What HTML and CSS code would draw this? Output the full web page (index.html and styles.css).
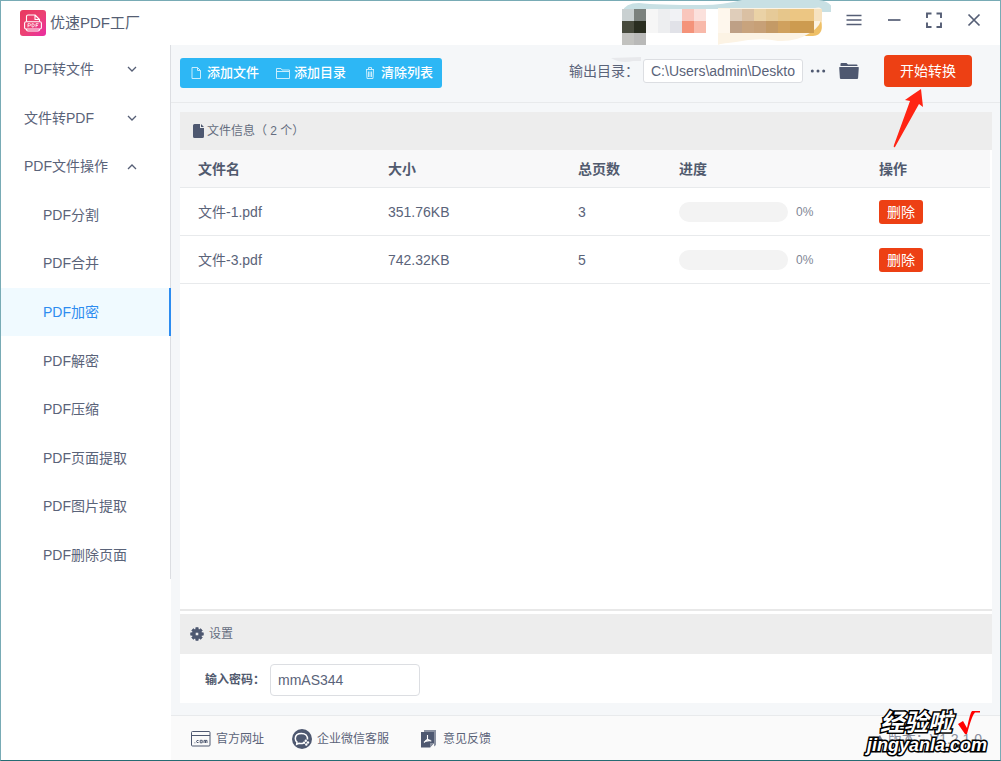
FILE: index.html
```html
<!DOCTYPE html>
<html lang="zh-CN">
<head>
<meta charset="utf-8">
<title>优速PDF工厂</title>
<link rel="stylesheet" href="styles.css">
</head>
<body>
<div class="window">
  <header class="titlebar">
    <svg class="logo" viewBox="0 0 26 26" aria-hidden="true">
      <defs><linearGradient id="lg" x1="0" y1="0" x2="1" y2="1"><stop offset="0" stop-color="#e8385f"/><stop offset=".5" stop-color="#ec4272"/><stop offset="1" stop-color="#e92da4"/></linearGradient></defs>
      <rect width="26" height="26" rx="3" fill="url(#lg)"/>
      <g fill="none" stroke="#fff" stroke-width="1.100" stroke-linejoin="round">
        <path d="M6.500 11.500V6.500q0-1.500 1.500-1.500h7l4.500 4.500v2M15 5v4.500h4.500M6.500 19v.5q0 1.500 1.500 1.500h10q1.500 0 1.500-1.500V19"/>
        <rect x="4.600" y="11.700" width="16.800" height="7.300" rx="1.500"/>
        <path d="M8 17.300v-3.600h1.500q1.200 0 1.200 1t-1.200 1H8M12 13.700v3.300h.8q1.500 0 1.500-1.650t-1.500-1.650zM16 17.300v-3.600h2.500M16 15.400h2" stroke-width=".8"/>
      </g>
    </svg>
    <h1 class="app-name">优速PDF工厂</h1>
    <div class="window-buttons">
      <button aria-label="菜单"><svg viewBox="0 0 18 18"><path d="M1.500 4.500h15M1.500 9h15M1.500 13.500h15" stroke-width="1.600"/></svg></button>
      <button aria-label="最小化"><svg viewBox="0 0 18 18"><path d="M3 9h12.500" stroke-width="1.700"/></svg></button>
      <button aria-label="最大化"><svg viewBox="0 0 18 18"><path d="M2 7V2.500h4.500M11.500 2.500H16V7M16 11.500V16h-4.500M6.500 16H2v-4.500" stroke-width="1.900"/></svg></button>
      <button aria-label="关闭"><svg viewBox="0 0 18 18"><path d="M3.500 3.500l11 11M14.500 3.500l-11 11" stroke-width="1.700"/></svg></button>
    </div>
  </header>
  <nav class="sidebar">
    <ul class="menu">
      <li><button class="group">PDF转文件<svg class="chevron" viewBox="0 0 10 10"><path d="M1 3l4 4 4-4"/></svg></button></li>
      <li><button class="group">文件转PDF<svg class="chevron" viewBox="0 0 10 10"><path d="M1 3l4 4 4-4"/></svg></button></li>
      <li><button class="group">PDF文件操作<svg class="chevron" viewBox="0 0 10 10"><path d="M1 8l4-4 4 4"/></svg></button></li>
      <li><a href="#">PDF分割</a></li>
      <li><a href="#">PDF合并</a></li>
      <li><a href="#" class="active">PDF加密</a></li>
      <li><a href="#">PDF解密</a></li>
      <li><a href="#">PDF压缩</a></li>
      <li><a href="#">PDF页面提取</a></li>
      <li><a href="#">PDF图片提取</a></li>
      <li><a href="#">PDF删除页面</a></li>
    </ul>
  </nav>
  <main class="main">
    <div class="toolbar">
      <div class="actions">
        <button><svg viewBox="0 0 14 14"><path d="M3 1.500h5.500l3 3v8H3zM8.500 1.500v3h3"/></svg>添加文件</button>
        <button><svg viewBox="0 0 14 14"><path d="M.5 12.500v-10h4.500l1 1.500h7.500v8.500zM.5 5.500h13"/></svg>添加目录</button>
        <button><svg viewBox="0 0 14 14"><path d="M3 3.500h8M5.500 3.500v-2h3v2M3.500 3.500l.5 9h6l.5-9M5.500 5.500v5.500M7 5.500v5.500M8.500 5.500v5.500"/></svg>清除列表</button>
      </div>
      <div class="output">
        <label for="dir">输出目录：</label>
        <input id="dir" class="dir" type="text" value="C:\Users\admin\Deskto">
        <button class="icon-button" aria-label="更多"><svg viewBox="0 0 16 16"><circle cx="2.300" cy="8" r="1.500"/><circle cx="8" cy="8" r="1.500"/><circle cx="13.700" cy="8" r="1.500"/></svg></button>
        <button class="icon-button folder" aria-label="打开目录"><svg viewBox="0 0 20 18"><path d="M1.500 4V2q0-1 1-1h5l1.500 1.500h8.500q1 0 1 1V4zM.8 5h18.400q.7 0 .6.700l-.7 10.300q-.1 1-1 1H1.900q-.9 0-1-1L.2 5.700Q.1 5 .8 5z"/></svg></button>
        <button class="start">开始转换</button>
      </div>
    </div>
    <section class="files">
      <h2 class="bar"><svg class="doc" viewBox="0 0 11 14"><path d="M1.500 0H7v4h4v8.500q0 1.500-1.500 1.500h-8Q0 14 0 12.500v-11Q0 0 1.500 0zM8 0l3 3H8z"/></svg>文件信息（ 2 个）</h2>
      <table>
        <colgroup><col class="c-name"><col class="c-size"><col class="c-pages"><col class="c-progress"><col></colgroup>
        <thead><tr><th>文件名</th><th>大小</th><th>总页数</th><th>进度</th><th>操作</th></tr></thead>
        <tbody>
          <tr><td>文件-1.pdf</td><td>351.76KB</td><td>3</td><td><div class="progress"><span class="track"></span>0%</div></td><td><button class="delete">删除</button></td></tr>
          <tr><td>文件-3.pdf</td><td>742.32KB</td><td>5</td><td><div class="progress"><span class="track"></span>0%</div></td><td><button class="delete">删除</button></td></tr>
        </tbody>
      </table>
    </section>
    <section class="settings">
      <h2 class="bar"><svg class="gear" viewBox="0 0 14 14"><path fill-rule="evenodd" d="M5.800 2V.6h2.400V2l1.400.6 1-1 1.800 1.800-1 1 .6 1.400h1.400v2.400H12l-.6 1.400 1 1-1.800 1.800-1-1-1.400.6v1.400H5.800V12l-1.400-.6-1 1-1.800-1.800 1-1L2 8.200H.6V5.800H2l.6-1.400-1-1 1.800-1.800 1 1zM7 5.200a1.800 1.800 0 1 0 0 3.600 1.800 1.800 0 0 0 0-3.600z" stroke="#4e5870" stroke-width=".6"/></svg>设置</h2>
      <div class="field">
        <label for="pwd">输入密码：</label>
        <input id="pwd" class="pwd" type="text" value="mmAS344">
      </div>
    </section>
    <footer class="footer">
      <a href="#"><svg class="site" viewBox="0 0 20 16"><rect x=".5" y=".5" width="18.500" height="14.500" rx="1"/><path d="M.5 4.500h18.500M3.500 11.800h.8M7.500 9.500q-2-.5-2 1t2 1M9.200 9.300h2v2.500h-2zM13 12V9.400h1.500V12M14.500 9.400H16V12"/></svg>官方网址</a>
      <a href="#"><svg class="wechat" viewBox="0 0 20 20"><circle cx="10" cy="10" r="10" fill="#4e5870"/><path d="M15.500 10.500q.2-6-6-6t-6.200 5q0 2.400 1.700 3.700l-.3 2 2.300-1q2 .5 4.200 0" fill="none" stroke="#fff" stroke-width="1.500"/><g fill="#fff"><circle cx="13.800" cy="11.800" r="1.200"/><circle cx="16" cy="13.500" r="1.200"/><circle cx="14.300" cy="15.500" r="1.200"/><circle cx="12" cy="13.800" r="1.200"/></g></svg>企业微信客服</a>
      <a href="#" class="opinion"><svg class="feedback" viewBox="0 0 15 18"><path d="M3 0h12v15l-2 1.500V2H3z" fill="#8990a0"/><path d="M0 2h13v11l-4 4.500H0z" fill="#4e5870"/><path d="M6.500 5v4.200L3 12.500M6.500 9.200l3.800 2M4 11.400l5.500-1" fill="none" stroke="#fff" stroke-width="1.100"/><path d="M9 17.500V13h4z" fill="#8990a0"/></svg>意见反馈</a>
      <span class="version"><svg class="up" viewBox="0 0 10 10"><path d="M0 8l6-7 4 8-4-2z" fill="#717b92"/></svg>版本：V1.2.1.0</span>
    </footer>
  </main>
  <svg class="mosaic" viewBox="0 0 220 66" aria-hidden="true">
    <path d="M11 12Q14 3 28 3q18 2 64 2 20 0 39-5h77q14 2 14 12z" fill="#c8e0e4"/>
    <path d="M209 16q6 19-7 20h-24V16z" fill="#efc067"/>
    <path d="M107 8h97q8-2 7 5 1 12-12 20-14 9-32 8-20-4-42 1-18 2-18 3z" fill="#fcf3e4"/>
    <path d="M0 58q10 6 22 3h8v-4z" fill="#e8e9ec"/>
    <g shape-rendering="crispEdges">
      <path d="M11 9h12v12H11z" fill="#c9d0d1"/><path d="M23 9h12v12H23z" fill="#7b817d"/>
      <path d="M11 21h12v12H11z" fill="#484b3e"/><path d="M23 21h12v12H23z" fill="#292d20"/>
      <path d="M11 33h12v12H11z" fill="#c2c2bf"/><path d="M23 33h12v12H23z" fill="#b9b9b8"/>
      <path d="M35 9h12v24H35z" fill="#f6f6f6"/><path d="M47 9h12v24H47z" fill="#edeef0"/>
      <path d="M59 9h12v12H59z" fill="#f1f2f5"/><path d="M59 21h12v12H59z" fill="#e1e2e8"/>
      <path d="M71 9h12v12H71z" fill="#f9c6bc"/><path d="M71 21h12v12H71z" fill="#f4937a"/>
      <path d="M83 9h12v12H83z" fill="#fbe1dc"/><path d="M83 21h12v12H83z" fill="#f8b9aa"/>
      <path d="M95 9h12v24H95z" fill="#fff"/><path d="M107 9h12v24h-12z" fill="#fef7ed"/>
      <path d="M119 9h12v12h-12z" fill="#dfcdba"/><path d="M119 21h12v12h-12z" fill="#bea086"/>
      <path d="M131 9h12v12h-12z" fill="#dac0a3"/><path d="M131 21h12v12h-12z" fill="#c8a37d"/>
      <path d="M143 9h12v12h-12z" fill="#ead2a6"/><path d="M143 21h12v12h-12z" fill="#c7a077"/>
      <path d="M155 9h12v12h-12z" fill="#e6ca98"/><path d="M155 21h12v12h-12z" fill="#c49a66"/>
      <path d="M167 9h12v12h-12z" fill="#e6c68b"/><path d="M167 21h12v12h-12z" fill="#d0a15e"/>
      <path d="M179 9h24v12h-24z" fill="#ecc683"/><path d="M179 21h24v12h-24z" fill="#cd9b50"/>
      <path d="M203 9h8v12h-8z" fill="#f6e2c0"/>
    </g>
  </svg>
  <svg class="arrow" viewBox="0 0 32 60" aria-hidden="true"><path d="M28 0l2 18-4-3L2 58Q0 59 1 56L17 12l-5-1q7-5 16-11z" fill="#ff2413"/></svg>
  <div class="watermark">
    <div class="mark-top"><span>经验啦</span><svg viewBox="0 0 24 24" aria-hidden="true"><path d="M1 13l5-3 4 7Q13 2 15 0h8v1.500h-5Q15 4 10 23H8Z" fill="#f00"/></svg></div>
    <div class="mark-site">jingyanla.com</div>
  </div>
</div>
</body>
</html>
```
FILE: styles.css
```css
* { box-sizing: border-box; }
body {
  margin: 0;
  font: 14px/20px "Liberation Sans", "Noto Sans CJK SC", sans-serif;
  color: #5a6379;
}
button, input { font: inherit; color: inherit; }
button { border: 0; padding: 0; background: none; cursor: pointer; }
a { color: inherit; text-decoration: none; }
h1, h2 { margin: 0; font-weight: 400; }
svg { display: block; flex: none; }

.window {
  position: relative;
  min-height: 100vh;
  display: grid;
  grid-template: 44px 1fr / 170px minmax(0, 1fr);
  border: 1px solid #78abb5;
  border-bottom-color: #256c73;
  background: #fff;
}

.titlebar {
  grid-column: 1 / -1;
  display: flex;
  align-items: center;
  gap: 4px;
  padding: 0 17px 0 19px;
}
.logo { width: 26px; height: 26px; }
.app-name { font-size: 15px; color: #555e73; }
.window-buttons { display: flex; gap: 22px; margin-left: auto; padding-bottom: 6px; }
.window-buttons svg { width: 18px; height: 18px; fill: none; stroke: #555e75; }

.menu {
  height: 534px;
  margin: 0;
  padding: 0;
  list-style: none;
  display: grid;
  grid-auto-rows: 1fr;
  border-right: 1px solid #dcdee2;
}
.menu li { display: grid; }
.menu a { display: flex; align-items: center; padding-left: 42px; }
.group {
  display: flex;
  align-items: center;
  justify-content: space-between;
  padding: 0 33px 0 23px;
}
.chevron { width: 10px; height: 10px; fill: none; stroke: #555e75; stroke-width: 1.3; }
.menu .active {
  margin-right: -1px;
  color: #2d8cf0;
  background: #f0faff;
  border-right: 2px solid #2d8cf0;
}

.main {
  display: flex;
  flex-direction: column;
  background: #f5f7f9;
}
.toolbar {
  display: flex;
  align-items: flex-start;
  justify-content: space-between;
  height: 58px;
  padding: 10px 28px 0 9px;
  border-bottom: 1px solid #e8eaec;
}
.actions {
  display: flex;
  gap: 17px;
  margin-top: 3px;
  padding: 0 9px;
  height: 30px;
  border-radius: 3px;
  background: #2db7f5;
}
.actions button { display: flex; align-items: center; gap: 4px; color: #fff; font-size: 13px; font-weight: 500; }
.actions svg { width: 14px; height: 14px; fill: none; stroke: #c9edfd; }
.output { display: flex; align-items: center; height: 32px; }
.dir {
  width: 160px;
  height: 24px;
  margin-left: 4px;
  padding: 0 7px;
  border: 1px solid #dcdee2;
  border-radius: 3px;
  background: #fff;
}
.icon-button { margin-left: 7px; }
.icon-button svg { width: 16px; height: 16px; fill: #4e5870; }
.folder { margin-left: 13px; }
.folder svg { width: 20px; height: 18px; }
.start {
  width: 88px;
  height: 32px;
  margin-left: 25px;
  border-radius: 4px;
  background: #ed4014;
  color: #fff;
}

.bar {
  display: flex;
  align-items: center;
  height: 38px;
  gap: 3px;
  background: #ededed;
  font-size: 12px;
  color: #656d80;
}
.bar svg { fill: #4e5870; }
.doc { width: 11px; height: 14px; }
.files {
  flex: 1;
  margin: 9px 8px 0 9px;
  border-bottom: 2px solid #e8e8e8;
  background: #fff;
}
.files .bar { padding-left: 13px; }
table { width: calc(100% - 2px); border-collapse: separate; border-spacing: 0; table-layout: fixed; }
.c-name, .c-size { width: 190px; }
.c-pages { width: 101px; }
.c-progress { width: 200px; }
th, td { height: 48px; padding: 0 0 0 18px; border-bottom: 1px solid #e8eaec; text-align: left; }
th { height: 38px; background: #f8f8f9; color: #515a6e; font-weight: 700; }
.progress { display: flex; align-items: center; gap: 8px; font-size: 12px; color: #808695; }
.track { width: 109px; height: 20px; border-radius: 10px; background: #f3f3f3; }
.delete {
  display: block;
  width: 44px;
  height: 24px;
  border-radius: 3px;
  background: #ed4014;
  color: #fff;
}

.settings { margin: 0 8px 12px 9px; padding-top: 3px; background: #fff; }
.settings .bar { height: 40px; gap: 5px; padding-left: 10px; }
.gear { width: 14px; height: 14px; }
.field { display: flex; align-items: center; gap: 5px; height: 49px; padding: 2px 0 0 25px; }
.field label { font-size: 12px; font-weight: 700; color: #515a6e; }
.pwd {
  width: 150px;
  height: 32px;
  padding: 0 7px;
  border: 1px solid #dcdee2;
  border-radius: 4px;
}

.footer {
  display: flex;
  align-items: center;
  gap: 28px;
  height: 45px;
  padding: 2px 18px 0 20px;
  border-top: 1px solid #e8eaec;
  background: #fafafa;
  font-size: 12px;
}
.footer a { display: flex; align-items: center; gap: 5px; }
.footer .opinion { gap: 7px; margin-left: 4px; }
.site { width: 20px; height: 16px; fill: none; stroke: #4e5870; }
.wechat { width: 20px; height: 20px; }
.feedback { width: 15px; height: 18px; }
.version { display: flex; align-items: center; gap: 4px; margin-left: auto; font-size: 14px; color: #8a90a0; }
.up { width: 10px; height: 10px; }

.mosaic { position: absolute; top: -1px; right: 169px; width: 220px; height: 66px; }
.arrow { position: absolute; top: 88px; right: 75px; width: 32px; height: 60px; }
.watermark {
  position: absolute;
  right: 13px;
  bottom: 5px;
  display: flex;
  flex-direction: column;
  align-items: flex-end;
  color: #fff;
  font-weight: 700;
  -webkit-text-stroke: 3px #000;
  paint-order: stroke fill;
}
.mark-top { display: flex; align-items: center; gap: 5px; padding-right: 6px; font-size: 24px; line-height: 24px; font-style: italic; }
.mark-top svg { width: 24px; height: 24px; }
.mark-site { font-size: 18px; line-height: 20px; font-style: italic; }
```
